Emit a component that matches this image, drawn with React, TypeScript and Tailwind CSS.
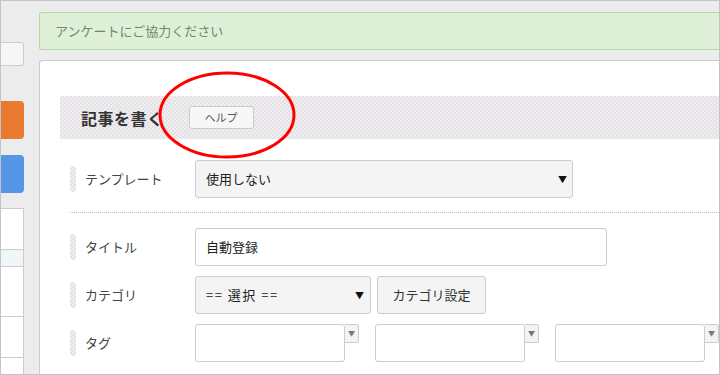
import React from "react";

const jp = "font-['Noto_Sans_CJK_JP','Noto_Sans',sans-serif]";
const checker =
  "bg-[repeating-conic-gradient(#e4e2e5_0_25%,#efedf0_0_50%)] bg-[length:4px_4px]";

function Label({ text }: { text: string }) {
  return (
    <div className="flex items-center w-[125px] shrink-0">
      <span className={`w-[6px] h-[26px] rounded-full ${checker}`} />
      <span className="ml-[9px] text-[13px] text-[#444]">{text}</span>
    </div>
  );
}

function Arrow() {
  return <span className="text-[9px] text-[#111] leading-none">▼</span>;
}

function TagInput() {
  return (
    <div className="flex items-start">
      <div className="w-[150px] h-[38px] bg-white border border-[#ccc] rounded-[3px]" />
      <div className="w-[14px] h-[19px] bg-[#f3f3f3] border border-l-0 border-[#ccc] rounded-r-[2px] flex items-center justify-center">
        <span className="text-[7px] text-[#777] leading-none">▼</span>
      </div>
    </div>
  );
}

export default function App() {
  return (
    <div
      className={`relative w-[720px] h-[375px] border border-[#c4c4c4] bg-[#ececec] overflow-hidden flex ${jp}`}
    >
      {/* sidebar */}
      <div className="w-[23px] shrink-0 flex flex-col">
        <div className="mt-[41px] h-[24px] bg-[#f6f6f6] border border-l-0 border-[#ccc] rounded-r-[3px]" />
        <div className="mt-[35px] h-[38px] bg-[#e97b31] rounded-r-[4px]" />
        <div className="mt-[16px] h-[38px] bg-[#5596e6] rounded-r-[4px]" />
        <div className="mt-[15px] flex-1 bg-white border-t border-r border-[#ccc] flex flex-col">
          <div className="h-[41px] border-b border-[#ccc]" />
          <div className="h-[17px] bg-[#f0f5f7] border-b border-[#ccc]" />
          <div className="h-[50px] border-b border-[#ccc]" />
          <div className="h-[41px] border-b border-[#ccc]" />
          <div className="flex-1" />
        </div>
      </div>

      {/* main */}
      <div className="ml-[15px] flex-1 flex flex-col pt-[11px]">
        <div className="h-[38px] bg-[#dff0d8] border border-r-0 border-[#b9d6a9] rounded-l-[3px] flex items-center pl-[15px]">
          <span className="text-[13px] text-[#6d8a6a]">アンケートにご協力ください</span>
        </div>

        <div className="mt-[10px] flex-1 bg-white border border-r-0 border-b-0 border-[#ccc] rounded-tl-[3px] pl-[20px] pt-[35px]">
          <div className={`h-[43px] ${checker} flex items-center pl-[21px]`}>
            <span className="text-[16px] font-bold text-[#333] tracking-[0.5px]">記事を書く</span>
            <button className="ml-[25px] w-[65px] h-[23px] bg-[#f7f7f7] border border-[#ccc] rounded-[3px] text-[11px] text-[#555] flex items-center justify-center">
              ヘルプ
            </button>
          </div>

          <div className="pl-[10px]">
            <div className="mt-[21px] flex items-center">
              <Label text="テンプレート" />
              <div className="w-[378px] h-[38px] bg-[#f4f4f4] border border-[#ccc] rounded-[3px] flex items-center justify-between pl-[10px] pr-[5px]">
                <span className="text-[13px] text-[#222]">使用しない</span>
                <Arrow />
              </div>
            </div>

            <div className="mt-[14px] border-t border-dotted border-[#bbb]" />

            <div className="mt-[15px] flex items-center">
              <Label text="タイトル" />
              <div className="w-[412px] h-[38px] bg-white border border-[#ccc] rounded-[3px] flex items-center pl-[10px]">
                <span className="text-[13px] text-[#222]">自動登録</span>
              </div>
            </div>

            <div className="mt-[10px] flex items-center">
              <Label text="カテゴリ" />
              <div className="w-[176px] h-[38px] bg-[#f4f4f4] border border-[#ccc] rounded-[3px] flex items-center justify-between pl-[10px] pr-[6px]">
                <span className="text-[13px] text-[#222] tracking-[1.5px]">== 選択 ==</span>
                <Arrow />
              </div>
              <button className="ml-[6px] w-[109px] h-[38px] bg-[#f4f4f4] border border-[#ccc] rounded-[3px] text-[13px] text-[#333] flex items-center justify-center">
                カテゴリ設定
              </button>
            </div>

            <div className="mt-[10px] flex items-start">
              <div className="h-[38px] flex items-center">
                <Label text="タグ" />
              </div>
              <div className="flex gap-[16px]">
                <TagInput />
                <TagInput />
                <TagInput />
              </div>
            </div>
          </div>
        </div>
      </div>

      {/* red annotation */}
      <svg
        className="absolute left-[155px] top-[68px] pointer-events-none"
        width="142"
        height="92"
        viewBox="0 0 142 92"
      >
        <ellipse cx="71" cy="46" rx="67" ry="42" fill="none" stroke="#ff0000" strokeWidth="3" />
      </svg>
    </div>
  );
}
